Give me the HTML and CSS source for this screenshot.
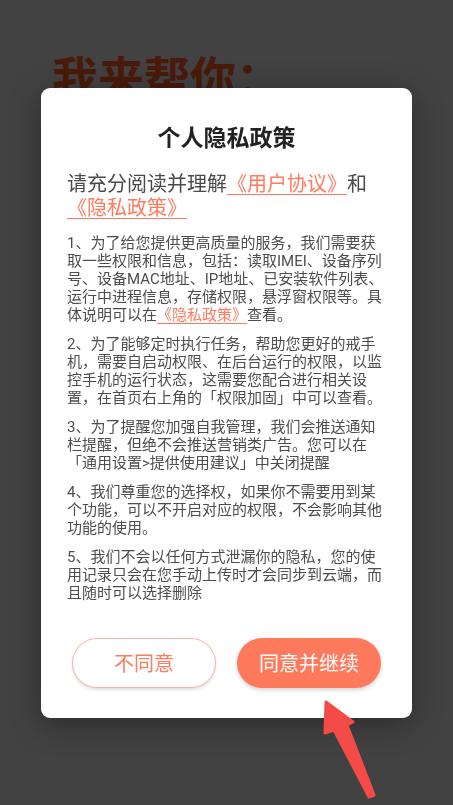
FILE: index.html
```html
<!DOCTYPE html>
<html lang="zh-CN">
<head>
<meta charset="utf-8">
<title>个人隐私政策</title>
<link rel="stylesheet" href="styles.css">
</head>
<body>
<div class="page">
  <h1 class="page-title">我来帮你：</h1>
</div>
<div class="overlay">
  <div class="dialog">
    <h2 class="dialog-title">个人隐私政策</h2>
    <p class="intro">请充分阅读并理解<a class="link">《用户协议》</a>和<a class="link">《隐私政策》</a></p>
    <div class="terms">
      <p>1、为了给您提供更高质量的服务，我们需要获取一些权限和信息，包括：读取IMEI、设备序列号、设备MAC地址、IP地址、已安装软件列表、运行中进程信息，存储权限，悬浮窗权限等。具体说明可以在<a class="link">《隐私政策》</a>查看。</p>
      <p>2、为了能够定时执行任务，帮助您更好的戒手机，需要自启动权限、在后台运行的权限，以监控手机的运行状态，这需要您配合进行相关设置，在首页右上角的「权限加固」中可以查看。</p>
      <p>3、为了提醒您加强自我管理，我们会推送通知栏提醒，但绝不会推送营销类广告。您可以在「通用设置&gt;提供使用建议」中关闭提醒</p>
      <p>4、我们尊重您的选择权，如果你不需要用到某个功能，可以不开启对应的权限，不会影响其他功能的使用。</p>
      <p>5、我们不会以任何方式泄漏你的隐私，您的使用记录只会在您手动上传时才会同步到云端，而且随时可以选择删除</p>
    </div>
    <div class="actions">
      <button class="btn btn-outline">不同意</button>
      <button class="btn btn-solid">同意并继续</button>
    </div>
  </div>
  <svg class="pointer" viewBox="310 690 80 115" width="80" height="115" aria-hidden="true">
    <polygon points="326,702 353,722 347,725 374,795 369,797 334,730 325,733" fill="#f44b47" stroke="#f44b47" stroke-width="3" stroke-linejoin="round"/>
  </svg>
</div>
</body>
</html>
```

FILE: styles.css
```css
html, body {
  margin: 0;
  padding: 0;
  height: 100%;
}

body {
  background: #424242;
  font-family: Roboto, "Noto Sans CJK SC", sans-serif;
  overflow: hidden;
}

.page {
  padding: 48px 0 0 52px;
}

.page-title {
  margin: 0;
  font-size: 46px;
  line-height: 54px;
  font-weight: 700;
  color: #4a1a0b;
  font-family: "Noto Sans CJK SC", sans-serif;
}

.overlay {
  position: fixed;
  inset: 0;
  display: flex;
  align-items: center;
  justify-content: center;
}

.dialog {
  width: 371px;
  box-sizing: border-box;
  background: #ffffff;
  border-radius: 9px;
  padding: 32px 26px 30px;
  box-shadow: 0 6px 30px rgba(0, 0, 0, 0.35);
}

.dialog-title {
  margin: 0;
  text-align: center;
  font-size: 23px;
  line-height: 32px;
  font-weight: 700;
  color: #222222;
  font-family: "Noto Sans CJK SC", sans-serif;
}

.intro {
  margin: 20px 0 0;
  font-size: 20px;
  line-height: 24px;
  color: #4a4a4a;
}

.link {
  color: #ff7b5e;
  text-decoration: underline;
  text-decoration-thickness: 1px;
  text-underline-offset: 3px;
}

.terms {
  margin-top: 14px;
}

.terms p {
  margin: 0 0 11px;
  font-size: 15px;
  line-height: 18px;
  color: #4d4d4d;
}

.terms p:last-child {
  margin-bottom: 0;
}

.actions {
  margin-top: 36px;
  display: flex;
  justify-content: center;
  gap: 21px;
}

.btn {
  width: 144px;
  height: 50px;
  border-radius: 25px;
  font-family: "Noto Sans CJK SC", sans-serif;
  font-size: 20px;
  padding: 0;
  cursor: pointer;
}

.btn-outline {
  background: #ffffff;
  color: #ff7b5e;
  border: 1px solid #f7b3a3;
  box-shadow: 0 2px 3px rgba(0, 0, 0, 0.12);
}

.btn-solid {
  background: #ff7a5c;
  color: #ffffff;
  border: none;
  box-shadow: 0 2px 4px rgba(0, 0, 0, 0.18);
}

.pointer {
  position: absolute;
  left: 310px;
  top: 690px;
}
```
